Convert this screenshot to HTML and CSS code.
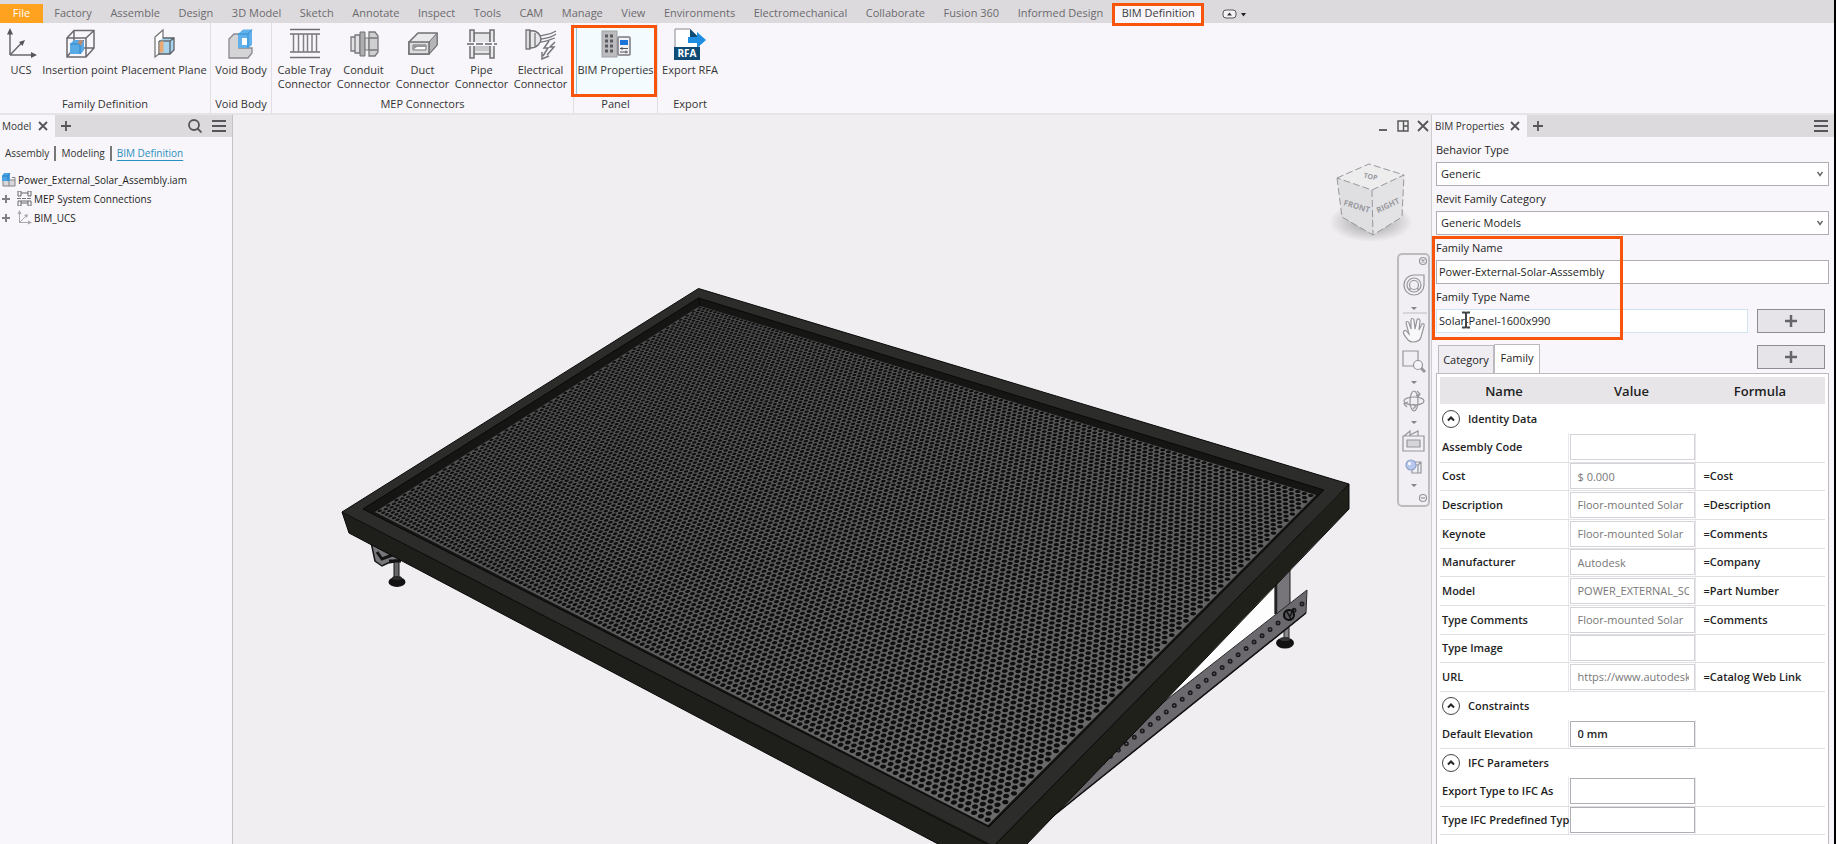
FILE: index.html
```html
<!DOCTYPE html>
<html lang="en">
<head>
<meta charset="utf-8">
<title>BIM Definition</title>
<link rel="stylesheet" href="styles.css">
</head>
<body>
<div class="app">
  <nav class="tabs">
    <div class="tab-list">
      <button class="tab tab-file">File</button>
      <button class="tab">Factory</button>
      <button class="tab">Assemble</button>
      <button class="tab">Design</button>
      <button class="tab">3D Model</button>
      <button class="tab">Sketch</button>
      <button class="tab">Annotate</button>
      <button class="tab">Inspect</button>
      <button class="tab">Tools</button>
      <button class="tab">CAM</button>
      <button class="tab">Manage</button>
      <button class="tab">View</button>
      <button class="tab">Environments</button>
      <button class="tab">Electromechanical</button>
      <button class="tab">Collaborate</button>
      <button class="tab">Fusion 360</button>
      <button class="tab">Informed Design</button>
      <button class="tab tab-active">BIM Definition</button>
    </div>
    <button class="tab-menu" aria-label="Ribbon display">
      <svg width="24" height="10" viewBox="0 0 24 10"><rect x="1" y="1" width="13" height="8" rx="3" fill="#f4f2f6" stroke="#555" /><path d="M5 6.500L7.500 3.500L10 6.500Z" fill="#333"/><path d="M19 4h5l-2.500 3.500z" fill="#222"/></svg>
    </button>
  </nav>

  <div class="ribbon">
    <section class="group group-family">
      <div class="tools">
        <button class="tool tool-ucs"><svg width="32" height="32" viewBox="0 0 32 32"><path d="M5 27V6M5 27H27M5 27L17 14.500" stroke="#6a6a6e" stroke-width="1.500" fill="none"/><path d="M5 0L8 6.500H2ZM32 27L26 30V24ZM20 12L17.500 18L14 14Z" fill="#55555a"/></svg><span>UCS</span></button>
        <button class="tool tool-insert"><svg width="32" height="32" viewBox="0 0 32 32"><path d="M3 10L10 2.500H30V20L22 29H3ZM3 10H22V29M22 10L30 2.500M10 2.500V20H30M10 20L3 29" fill="none" stroke="#6a6a6e" stroke-width="1.500"/><path d="M6 16L10 12H20V22L17 26H6Z" fill="#5aaae6"/><path d="M6 16H16V26M16 16L20 12" fill="none" stroke="#2f86c4"/><path d="M14 15l5-2M16 12l1 5" stroke="#c48a70" stroke-width="2"/></svg><span>Insertion point</span></button>
        <button class="tool tool-plane"><svg width="32" height="32" viewBox="0 0 32 32"><path d="M7 9L15 2V23L7 29Z" fill="#fff" stroke="#77777b" stroke-width="1.300"/><path d="M15 10H26V22L22 26H11V13M22 13V26M22 13L26 10" fill="#a8d4ee" stroke="#5b6065" stroke-width="1.300"/><path d="M11 13H22" stroke="#5b6065" stroke-width="1.300"/><path d="M11.500 14L15.500 13V24L11.500 25Z" fill="#eaa873"/></svg><span>Placement Plane</span></button>
      </div>
      <h2 class="group-name">Family Definition</h2>
    </section>
    <section class="group group-void">
      <div class="tools">
        <button class="tool"><svg width="32" height="32" viewBox="0 0 32 32"><path d="M4 11L9 6H14V20H27V25L23 30H4Z" fill="#d4d4d6" stroke="#88888c" stroke-width="1.300"/><path d="M13 6L18 1.500H27V17L23 20H13Z" fill="#62b1ea"/><path d="M17 10H22V17H17Z" fill="#fff"/><path d="M13 6H23V20M23 6L27 1.500" fill="none" stroke="#2f8fd2"/></svg><span>Void Body</span></button>
      </div>
      <h2 class="group-name">Void Body</h2>
    </section>
    <section class="group group-mep">
      <div class="tools">
        <button class="tool"><svg width="32" height="32" viewBox="0 0 32 32"><path d="M1 1.500H31M1 6H31M1 24H31M1 29.500H31" stroke="#707074" stroke-width="1.500"/><path d="M4.500 6V24M9.500 6V24M14.500 6V24M18.500 6V24M23 6V24M27.500 6V24" stroke="#808084" stroke-width="1.500"/></svg><span>Cable Tray Connector</span></button>
        <button class="tool"><svg width="32" height="32" viewBox="0 0 32 32"><path d="M3 9H7V23H3ZM7 7H12V25H7Z" fill="#e2e2e4" stroke="#77777b" stroke-width="1.300"/><path d="M12 4H17V28H12Z" fill="#aeaeb1" stroke="#707074"/><path d="M17 10H21V22H17Z" fill="#ddd" stroke="#77777b"/><path d="M21 4H27L30 8V24L27 28H21ZM21 10H30M21 22H30" fill="#cfcfd2" stroke="#77777b" stroke-width="1.300"/></svg><span>Conduit Connector</span></button>
        <button class="tool"><svg width="32" height="32" viewBox="0 0 32 32"><path d="M2 14L11 5H30V17L22 26H2Z" fill="#e9e9eb" stroke="#707074" stroke-width="1.500"/><path d="M22 14L30 5V17L22 26Z" fill="#b5b5b8" stroke="#707074"/><path d="M2 14H22V26H2Z" fill="#dcdcde" stroke="#707074" stroke-width="1.500"/><path d="M6 17H19V22H6Z" fill="#fff" stroke="#707074"/><path d="M6 22L10 19H19V17H6Z" fill="#98989c"/></svg><span>Duct Connector</span></button>
        <button class="tool"><svg width="32" height="32" viewBox="0 0 32 32"><path d="M8 5H24V26H8Z" fill="#e6e6e8" stroke="#77777b" stroke-width="1.300"/><path d="M8 17H24V23H8Z" fill="#c8c8cb"/><path d="M4 2H8V30H4ZM24 2H28V30H24Z" fill="#e9e9eb" stroke="#707074" stroke-width="1.500"/><path d="M0 16H32" stroke="#f8f6fa" stroke-width="4"/><path d="M1 16H31" stroke="#66666a" stroke-width="1.300" stroke-dasharray="7 2"/></svg><span>Pipe Connector</span></button>
        <button class="tool"><svg width="32" height="32" viewBox="0 0 32 32"><path d="M1 2H5V21H1Z" fill="#dcdcde" stroke="#77777b" stroke-width="1.300"/><path d="M5 3C12 2 16 7 16 11S12 20 5 20Z" fill="#e8e8ea" stroke="#707074" stroke-width="1.500"/><path d="M10 5V18M15 8C21 6 25 7 31 3M16 11C22 10 26 10 31 6M15 14C20 14 24 12 30 10" stroke="#77777b" stroke-width="1.300" fill="none"/><path d="M24 13L19 20H23L18 28M30 14L25 19H29L22 27M17 24V31L24 28" stroke="#77777b" stroke-width="1.500" fill="none"/></svg><span>Electrical Connector</span></button>
      </div>
      <h2 class="group-name">MEP Connectors</h2>
    </section>
    <section class="group group-panel">
      <div class="tools">
        <button class="tool tool-selected"><svg width="32" height="32" viewBox="0 0 32 32"><rect x="2" y="3" width="15" height="26" fill="#bcbcbf" stroke="#a0a0a4"/><path d="M5 8h3M10 8h3M5 13h3M10 13h3M5 18h3M10 18h3M5 23h3M10 23h3" stroke="#5a5a60" stroke-width="3"/><rect x="18" y="9" width="12" height="18" rx="1" fill="#f2f2f4" stroke="#7a7a80" stroke-width="1.500"/><rect x="20" y="12" width="8" height="5" fill="#1d74d8"/><path d="M20 20.500h8M20 24h8M22 19v3M26 22.500v3" stroke="#55555a"/></svg><span>BIM Properties</span></button>
        <i class="mark mark-tool"></i>
      </div>
      <h2 class="group-name">Panel</h2>
    </section>
    <section class="group group-export">
      <div class="tools">
        <button class="tool"><svg width="32" height="32" viewBox="0 0 32 32"><path d="M1 20V1H16L25 10V20" fill="#fff" stroke="#88888c"/><path d="M16 1L25 10H16Z" fill="#0f4c75"/><path d="M14 9H23V4L32 12L23 20V15H14Z" fill="#1f8de0"/><rect x="0" y="19" width="26" height="13" fill="#0f4c75"/><text x="13" y="29" text-anchor="middle" class="rfa">RFA</text></svg><span>Export RFA</span></button>
      </div>
      <h2 class="group-name">Export</h2>
    </section>
  </div>

  <div class="work">
    <aside class="browser">
      <div class="bar">
        <div class="bar-tab"><span>Model</span><button class="ic" aria-label="Close"><svg width="10" height="10" viewBox="0 0 10 10"><path d="M1 1L9 9M9 1L1 9" class="st"/></svg></button></div>
        <button class="ic" aria-label="Add"><svg width="10" height="10" viewBox="0 0 10 10"><path d="M5 0V10M0 5H10" class="st"/></svg></button>
        <span class="grow"></span>
        <button class="ic" aria-label="Search"><svg width="14" height="14" viewBox="0 0 14 14"><circle cx="6" cy="6" r="5" class="st"/><path d="M9.500 9.500L13.500 13.500" class="st"/></svg></button>
        <button class="ic" aria-label="Menu"><svg width="14" height="12" viewBox="0 0 14 12"><path d="M0 1H14M0 6H14M0 11H14" class="st"/></svg></button>
      </div>
      <div class="modes">
        <button>Assembly</button><button>Modeling</button><button class="on">BIM Definition</button>
      </div>
      <ul class="tree">
        <li><svg width="14" height="14" viewBox="0 0 14 14"><path d="M6 7H13V13H1V8" fill="#d8d8da" stroke="#808084"/><path d="M7 8V13M10 4.500H13V7" fill="none" stroke="#808084"/><path d="M0 3L2 0H8V8H0Z" fill="#4ba3e3"/><path d="M0 3H6V8M6 3L8 0" fill="none" stroke="#2a80be"/></svg>Power_External_Solar_Assembly.iam</li>
        <li><svg class="exp" width="8" height="8" viewBox="0 0 8 8"><path d="M4 0V8M0 4H8" stroke="#808084" stroke-width="2"/></svg><svg width="15" height="15" viewBox="0 0 15 15"><path d="M1 0H4V5H1ZM11 0H14V5H11ZM4 2H11M1 10H4V15H1ZM11 10H14V15H11ZM4 12H11M4 10H11" fill="none" stroke="#66666a"/><path d="M0 7.500H15" stroke="#77777b" stroke-dasharray="4 1"/></svg>MEP System Connections</li>
        <li><svg class="exp" width="8" height="8" viewBox="0 0 8 8"><path d="M4 0V8M0 4H8" stroke="#808084" stroke-width="2"/></svg><svg width="15" height="15" viewBox="0 0 15 15"><path d="M2.500 2V12.500H13M2.500 12.500L9 6" fill="none" stroke="#a8a8ac"/><path d="M2.500 0L4.500 4H0.500ZM15 12.500L11 14.500V10.500ZM11 4L10 8L7 5Z" fill="#a8a8ac"/></svg>BIM_UCS</li>
      </ul>
    </aside>

    <main class="view">
      <svg class="scene" viewBox="233 115 1198 729" preserveAspectRatio="xMidYMid slice">
        <defs>
          <linearGradient id="plate" x1="0" y1="0" x2="0.600" y2="1"><stop offset="0" stop-color="#474748"/><stop offset="1" stop-color="#6a6a6b"/></linearGradient>
          <radialGradient id="shade"><stop offset="0.300" stop-color="#777" stop-opacity="0.500"/><stop offset="1" stop-color="#777" stop-opacity="0"/></radialGradient>
        </defs>
        <path d="M1274 585V616L1162 702Z" fill="#fdfdfe"/>
        <path d="M1275 560H1290V614H1275Z" fill="#77757a" stroke="#1c1c1c"/>
        <path d="M1276 560V614" stroke="#222" stroke-width="2.500"/>
        <path d="M1284 624H1289V638H1284Z" fill="#8a888d" stroke="#222"/>
        <ellipse cx="1285" cy="643" rx="9" ry="5.500" fill="#111"/><ellipse cx="1285" cy="639" rx="5" ry="2" fill="#333"/>
        <path d="M1307 590L1306 613L1052 817L1000 840L1050 790L1160 705Z" fill="#6b696e" stroke="#2a2a2c"/>
        <path d="M1306 613L1052 817" stroke="#111" stroke-width="1.500"/>
        <path d="M1302 604L1102 763" stroke="#1c1c1e" stroke-width="5" stroke-linecap="round" stroke-dasharray="0 10.200"/>
        <path d="M1302 604L1102 763" stroke="#717073" stroke-width="1.600" stroke-linecap="round" stroke-dasharray="0 10.200"/>
        <circle cx="1289" cy="615" r="5" fill="#55555a" stroke="#0c0c0c" stroke-width="2"/><path d="M1286 610L1291 619M1294 609L1290 616" stroke="#111" stroke-width="1.500"/>
        <path d="M371 542L375 561L382 566L388 563L400 561V550Z" fill="#77767a" stroke="#151515" stroke-width="1.500"/>
        <path d="M377 552L382 559L395 554" stroke="#151515" stroke-width="3" fill="none"/>
        <path d="M394 560H399V577H394Z" fill="#66656a" stroke="#151515"/><path d="M389 561H401" stroke="#111" stroke-width="3"/>
        <ellipse cx="397" cy="582" rx="8.500" ry="5" fill="#111"/><ellipse cx="397" cy="578" rx="5" ry="2" fill="#2a2a2a"/>
        <path d="M698.500 288.500L1349 484L993 847L342 512Z" fill="#2c2c2b"/>
        <path d="M342 512L349 533L940 845H993Z" fill="#1e1e1a"/>
        <path d="M1349 484V509L1290 570L1160 706L1025 846H993Z" fill="#20201b"/>
        <path d="M698.500 298L1324 490L989 827L363 509Z" fill="#151513"/>
        <path d="M700 306L1316 495L988 825L375 512Z" fill="url(#plate)"/>
        <path id="holes" fill="#0e0e0f"/>
        <path d="M698.500 288.500L1349 484L993 847L342 512ZM698.500 298L1324 490L989 827L363 509ZM698.500 298L700 306M342 512L349 533L940 845M1349 484V509L1160 706L1025 846" fill="none" stroke="#090909"/>

        <ellipse cx="1371" cy="222" rx="42" ry="20" fill="url(#shade)"/>
        <path d="M1337 178L1369 164L1404 175L1372 190Z" fill="#ededee"/>
        <path d="M1337 178L1372 190L1373 235L1342 217Z" fill="#dfdfe2"/>
        <path d="M1372 190L1404 175L1402 217L1373 235Z" fill="#e3e3e6"/>
        <path d="M1337 178L1369 164L1404 175L1372 190ZM1337 178L1342 217L1373 235L1402 217L1404 175M1372 190L1373 235" fill="none" stroke="#98989d" stroke-dasharray="7 3"/>
        <text class="cube" text-anchor="middle" transform="translate(1356 209) rotate(17)">FRONT</text>
        <text class="cube" text-anchor="middle" transform="translate(1389 208) rotate(-25)">RIGHT</text>
        <text class="cube cube-top" text-anchor="middle" transform="translate(1370 179) rotate(12)">TOP</text>
      </svg>

      <div class="win">
        <button class="ic" aria-label="Minimize"><svg width="12" height="12" viewBox="0 0 12 12"><path d="M2 10H10" class="st"/></svg></button>
        <button class="ic" aria-label="Tile"><svg width="12" height="12" viewBox="0 0 12 12"><path d="M1 1H11V11H1ZM6.500 1V11M6.500 6H11" fill="none" stroke="#555" stroke-width="1.400"/></svg></button>
        <button class="ic" aria-label="Close view"><svg width="12" height="12" viewBox="0 0 12 12"><path d="M1 1L11 11M11 1L1 11" class="st"/></svg></button>
      </div>

      <div class="navbar">
        <svg width="32" height="252" viewBox="0 0 32 252" fill="none" stroke="#96969b" stroke-width="1.200">
          <circle cx="24" cy="6" r="3.500"/><path d="M22.500 4.500L25.500 7.500M25.500 4.500L22.500 7.500"/>
          <path d="M15 20H25V30A10 10 0 1 1 15 20Z"/><circle cx="15" cy="30" r="7"/><circle cx="15" cy="30" r="4.500"/><path d="M10 35l2-2M20 35l-2-2"/>
          <path d="M12 52H18L15 55ZM12 126H18L15 129ZM12 166H18L15 169ZM12 229H18L15 232Z" fill="#85858a" stroke="none"/>
          <path d="M4 58H28" stroke="#c4c4c8"/>
          <path d="M9 85C6 81 3 78 5 76S9 78 10 79L7 68C7 66 9 66 10 68L12 74V65C12 63 14 63 15 65L16 74L18 65C19 63 21 64 21 66L20 75L23 69C24 68 26 69 25 71L22 82C21 86 17 87 14 87S10 86 9 85Z" fill="#f8f8fa"/>
          <path d="M4 96H19V111H4Z"/><circle cx="19" cy="110" r="4.500" fill="#f5f5f8"/><path d="M22 113L26 117" stroke-width="3"/>
          <ellipse cx="15" cy="146" rx="10" ry="4"/><ellipse cx="15" cy="146" rx="4" ry="10"/><path d="M17 141L21 139M18 136L21 139L19 142M9 147L5 149L8 152M14 149L17 151L14 154"/>
          <path d="M4 181H25V196H4ZM5 181L11 176V180L19 176V181"/><path d="M8 185H21V192H8Z" fill="#d5d5da"/>
          <path d="M14 207H22V218H13V211M22 207L19 210H14M19 210V218" fill="#eef0f4"/><circle cx="12" cy="210" r="5" fill="#b9c9ee" stroke="#8fa3cc"/><circle cx="10.500" cy="208.500" r="1.500" fill="#fff" stroke="none"/>
          <circle cx="24" cy="243" r="3.500"/><path d="M22 243H26"/>
        </svg>
      </div>
    </main>

    <aside class="props">
      <div class="bar">
        <div class="bar-tab bar-tab-props"><span>BIM Properties</span><button class="ic" aria-label="Close"><svg width="10" height="10" viewBox="0 0 10 10"><path d="M1 1L9 9M9 1L1 9" class="st"/></svg></button></div>
        <button class="ic" aria-label="Add"><svg width="10" height="10" viewBox="0 0 10 10"><path d="M5 0V10M0 5H10" class="st"/></svg></button>
        <span class="grow"></span>
        <button class="ic" aria-label="Menu"><svg width="14" height="12" viewBox="0 0 14 12"><path d="M0 1H14M0 6H14M0 11H14" class="st"/></svg></button>
      </div>
      <form class="form">
        <label for="behavior">Behavior Type</label>
        <div class="pick"><select id="behavior"><option>Generic</option></select><svg width="6" height="6" viewBox="0 0 6 6"><path d="M0.500 1L3 4.500L5.500 1" fill="none" stroke="#666" stroke-width="1.500"/></svg></div>
        <label for="category">Revit Family Category</label>
        <div class="pick"><select id="category"><option>Generic Models</option></select><svg width="6" height="6" viewBox="0 0 6 6"><path d="M0.500 1L3 4.500L5.500 1" fill="none" stroke="#666" stroke-width="1.500"/></svg></div>
        <div class="marked">
          <label for="fname">Family Name</label>
          <input id="fname" type="text" value="Power-External-Solar-Asssembly">
          <label for="ftype">Family Type Name</label>
          <div class="with-add"><input id="ftype" class="focus" type="text" value="Solar-Panel-1600x990"><button type="button" class="add" aria-label="Add family type"><svg width="12" height="12" viewBox="0 0 12 12"><path d="M6 0V12M0 6H12" stroke="#66666a" stroke-width="2.500"/></svg></button></div>
          <i class="mark mark-form"></i>
          <svg class="caret" width="8" height="18" viewBox="0 0 8 18"><path d="M0 1.500H3L4 2.500L5 1.500H8M0 16.500H3L4 15.500L5 16.500H8M4 2.500V15.500" fill="none" stroke="#444" stroke-width="2"/></svg>
        </div>
        <div class="subtabs">
          <button type="button" class="subtab">Category</button><button type="button" class="subtab subtab-on">Family</button><span class="grow"></span>
          <button type="button" class="add" aria-label="Add parameter"><svg width="12" height="12" viewBox="0 0 12 12"><path d="M6 0V12M0 6H12" stroke="#66666a" stroke-width="2.500"/></svg></button>
        </div>
        <div class="grid">
          <table>
            <colgroup><col class="c1"><col class="c2"><col></colgroup>
            <thead><tr><th>Name</th><th>Value</th><th>Formula</th></tr></thead>
            <tbody>
              <tr class="sec"><td colspan="3"><button type="button"><svg width="18" height="18" viewBox="0 0 18 18"><circle cx="9" cy="9" r="8.500" fill="#fff" stroke="#444"/><path d="M6 10.500L9 7.500L12 10.500" fill="none" stroke="#222" stroke-width="2"/></svg>Identity Data</button></td></tr>
              <tr><td><label for="p1">Assembly Code</label></td><td><input id="p1" type="text"></td><td></td></tr>
              <tr><td><label for="p2">Cost</label></td><td><input id="p2" type="text" value="$ 0.000"></td><td>=Cost</td></tr>
              <tr><td><label for="p3">Description</label></td><td><input id="p3" type="text" value="Floor-mounted Solar"></td><td>=Description</td></tr>
              <tr><td><label for="p4">Keynote</label></td><td><input id="p4" type="text" value="Floor-mounted Solar"></td><td>=Comments</td></tr>
              <tr><td><label for="p5">Manufacturer</label></td><td><input id="p5" type="text" value="Autodesk"></td><td>=Company</td></tr>
              <tr><td><label for="p6">Model</label></td><td><input id="p6" type="text" value="POWER_EXTERNAL_SOLAR"></td><td>=Part Number</td></tr>
              <tr><td><label for="p7">Type Comments</label></td><td><input id="p7" type="text" value="Floor-mounted Solar"></td><td>=Comments</td></tr>
              <tr><td><label for="p8">Type Image</label></td><td><input id="p8" type="text"></td><td></td></tr>
              <tr><td><label for="p9">URL</label></td><td><input id="p9" type="text" value="https://www.autodesk.com"></td><td>=Catalog Web Link</td></tr>
              <tr class="sec"><td colspan="3"><button type="button"><svg width="18" height="18" viewBox="0 0 18 18"><circle cx="9" cy="9" r="8.500" fill="#fff" stroke="#444"/><path d="M6 10.500L9 7.500L12 10.500" fill="none" stroke="#222" stroke-width="2"/></svg>Constraints</button></td></tr>
              <tr><td><label for="p10">Default Elevation</label></td><td><input id="p10" class="edit" type="text" value="0 mm"></td><td></td></tr>
              <tr class="sec"><td colspan="3"><button type="button"><svg width="18" height="18" viewBox="0 0 18 18"><circle cx="9" cy="9" r="8.500" fill="#fff" stroke="#444"/><path d="M6 10.500L9 7.500L12 10.500" fill="none" stroke="#222" stroke-width="2"/></svg>IFC Parameters</button></td></tr>
              <tr><td><label for="p11">Export Type to IFC As</label></td><td><input id="p11" class="edit" type="text"></td><td></td></tr>
              <tr><td><label for="p12">Type IFC Predefined Typ</label></td><td><input id="p12" class="edit" type="text"></td><td></td></tr>
            </tbody>
          </table>
        </div>
      </form>
    </aside>
  </div>
</div>
<script src="mesh.js"></script>
</body>
</html>
```
FILE: styles.css
```css
* { box-sizing: border-box; }
body { margin: 0; font-family: "Open Sans", "Noto Sans", sans-serif; font-size: 11px; line-height: 14px; color: #333; background: #000; }
button, input, select { font: inherit; color: inherit; }
button { border: 0; padding: 0; background: none; }
h2 { margin: 0; font-size: 11px; font-weight: 400; }
.app { height: 100vh; margin-right: 2px; display: flex; flex-direction: column; overflow: hidden; background: #f8f6fa; }
.grow { flex: 1; }
.st { fill: none; stroke: #55555a; stroke-width: 1.800; }
.ic { display: flex; align-items: center; justify-content: center; }
.mark { position: absolute; border: 3px solid #f8540a; pointer-events: none; }

.tabs { display: flex; height: 23px; padding-top: 4px; background: #dcdadd; flex: none; }
.tab-list { display: flex; width: 1204px; }
.tab { flex: 1 1 auto; padding: 0 8px 2px; color: #6c6a6e; white-space: nowrap; }
.tab-file { flex: none; width: 43px; margin-right: 2px; background: #ffa21f; color: #fff; }
.tab-active { position: relative; background: #f8f6fa; color: #3c3c3e; }
.tab-active::after { content: ""; position: absolute; inset: -1px 0 -3px; border: 3px solid #f8540a; }
.tab-menu { margin-left: 18px; display: flex; align-items: center; }

.ribbon { display: flex; height: 92px; flex: none; border-bottom: 2px solid #e6e4e7; }
.group { display: flex; flex-direction: column; border-right: 1px solid #e0dee2; }
.group-family { width: 211px; }
.group-void { width: 61px; }
.group-mep { width: 302px; }
.group-panel { width: 84px; }
.group-export { width: 64px; border-right: 0; }
.tools { position: relative; flex: 1; display: flex; justify-content: center; padding-top: 4px; }
.tool { display: flex; flex-direction: column; align-items: center; gap: 3px; width: 59px; height: 68px; }
.tool svg { flex: none; margin-top: 1px; }
.tool-ucs { width: 40px; }
.tool-insert { width: 78px; white-space: nowrap; }
.tool-plane { width: 90px; white-space: nowrap; }
.tool-selected { width: 80px; background: #f4fbff; border: 1px solid #8fc8dc; white-space: nowrap; }
.tool-selected svg { margin-top: 0; }
.mark-tool { top: 2px; right: 0; bottom: -2px; left: -3px; }
.group-name { line-height: 18px; text-align: center; }
.rfa { font-size: 10px; font-weight: 700; fill: #fff; }

.work { flex: 1; min-height: 0; display: flex; }
.bar { display: flex; align-items: center; gap: 10px; height: 22px; padding-right: 6px; background: #dcdadd; flex: none; font-size: 10px; }
.bar-tab { display: flex; align-items: center; justify-content: space-between; width: 55px; height: 22px; padding: 0 7px 0 2px; margin-right: -4px; background: #f8f6fa; white-space: nowrap; }
.bar-tab-props { width: 95px; padding-left: 3px; }
.browser { width: 233px; border-right: 1px solid #c4c2c6; font-size: 10px; }
.modes { display: flex; padding: 9px 5px 0; }
.modes button { padding: 0 5px; line-height: 15px; border-left: 2px solid #777; }
.modes button:first-child { padding-left: 0; border-left: 0; }
.modes .on { color: #2a8fc0; text-decoration: underline; text-underline-offset: 3px; }
.tree { list-style: none; margin: 9px 0 0; padding: 0 2px; }
.tree li { display: flex; align-items: center; gap: 2px; height: 19px; color: #222; }
.tree .exp { margin-right: 5px; }

.view { position: relative; flex: 1; min-width: 0; background: #f0eef1; }
.scene { display: block; width: 100%; height: 100%; }
.cube { font-size: 8px; font-weight: 700; fill: #9a9a9f; }
.cube-top { font-size: 7px; }
.win { position: absolute; top: 5px; right: 2px; display: flex; gap: 8px; }
.navbar { position: absolute; top: 138px; right: 1px; border: 2px solid #bdbbc0; border-radius: 5px; background: #f1eff3; width: 33px; height: 254px; }

.props { width: 403px; border-left: 1px solid #cfcdd1; display: flex; flex-direction: column; }
.form { flex: 1; display: flex; flex-direction: column; padding: 0 5px 0 4px; color: #1e1e1e; }
.form > label, .marked label { display: block; line-height: 25px; height: 25px; }
.form select, .form input { display: block; width: 100%; height: 24px; border: 1px solid #b0aeb3; border-radius: 0; background: #fff; padding: 0 2px 1px; outline: 0; }
.form select { appearance: none; padding: 0 4px 1px; }
.pick { position: relative; }
.pick svg { position: absolute; right: 6px; top: 9px; }
.marked { position: relative; }
.with-add { display: flex; justify-content: space-between; padding-right: 4px; gap: 9px; }
.form .with-add .focus { border-color: #cfe3f0; }
.add { flex: none; width: 68px; height: 24px; border: 1px solid #8e8c91; background: #e6e4e8; display: flex; align-items: center; justify-content: center; }
.mark-form { top: 1px; left: -4px; bottom: -7px; width: 191px; }
.caret { position: absolute; left: 26px; bottom: 4px; }
.subtabs { display: flex; align-items: center; height: 34px; margin-top: 6px; padding: 1px 4px 0 2px; }
.subtab { align-self: flex-end; width: 56px; height: 28px; border: 1px solid #bcbabf; border-bottom: 0; background: #efedf1; }
.subtab-on { width: 46px; height: 29px; padding-bottom: 2px; background: #fff; }
.grid { flex: 1; min-height: 0; border: 1px solid #bcbabf; border-bottom: 0; background: #fff; padding: 3px 3px 0; }
table { width: 100%; table-layout: fixed; border-collapse: collapse; font-weight: 600; }
.c1 { width: 128px; }
.c2 { width: 127px; }
th { height: 27px; padding: 0; font-size: 13px; font-weight: 600; background: #e7e5e8; }
td { height: 29px; padding: 0 0 0 2px; border-bottom: 1px solid #e2e0e4; white-space: nowrap; }
tr:nth-child(3n) td { height: 28px; }
td + td { padding-left: 1px; border-left: 1px solid #e8e6ea; }
td + td + td { padding-left: 8px; }
.sec td { border-bottom: 0; }
.sec button { display: flex; align-items: center; gap: 8px; font-weight: 600; }
.form td input { width: 125px; height: 26px; padding: 0 5px 0 7px; border: 1px solid #d5d3d8; color: #777; font-weight: 400; }
.form td .edit { border-color: #b0aeb3; color: #1e1e1e; font-weight: 600; }
```
FILE: mesh.js
```js
// Perforated plate: a hexagonal hole lattice projected onto the plate's four corners.
(function () {
  const W = 1600, H = 990, step = 12.8, r = 4.9;
  const [x0, y0] = [700, 306], [x1, y1] = [1316, 495], [x2, y2] = [988, 825], [x3, y3] = [375, 512];
  const dx1 = x1 - x2, dx2 = x3 - x2, dx3 = x0 - x1 + x2 - x3;
  const dy1 = y1 - y2, dy2 = y3 - y2, dy3 = y0 - y1 + y2 - y3;
  const det = dx1 * dy2 - dx2 * dy1;
  const g = (dx3 * dy2 - dx2 * dy3) / det, h = (dx1 * dy3 - dx3 * dy1) / det;
  const a = x1 - x0 + g * x1, b = x3 - x0 + h * x3;
  const d = y1 - y0 + g * y1, e = y3 - y0 + h * y3;
  function project(px, py) {
    const u = px / W, v = py / H, w = g * u + h * v + 1;
    return ((a * u + b * v + x0) / w).toFixed(2) + " " + ((d * u + e * v + y0) / w).toFixed(2);
  }
  const parts = [];
  const rowStep = step * Math.sqrt(3) / 2;
  for (let j = 0, y = 6; y < H - 5; y += rowStep, j++) {
    for (let x = 6 + (j % 2) * step / 2; x < W - 5; x += step) {
      const pts = [];
      for (let k = 0; k < 8; k++) {
        const t = k * Math.PI / 4;
        pts.push(project(x + r * Math.cos(t), y + r * Math.sin(t)));
      }
      parts.push("M" + pts.join("L") + "Z");
    }
  }
  document.getElementById("holes").setAttribute("d", parts.join(""));
})();
```
